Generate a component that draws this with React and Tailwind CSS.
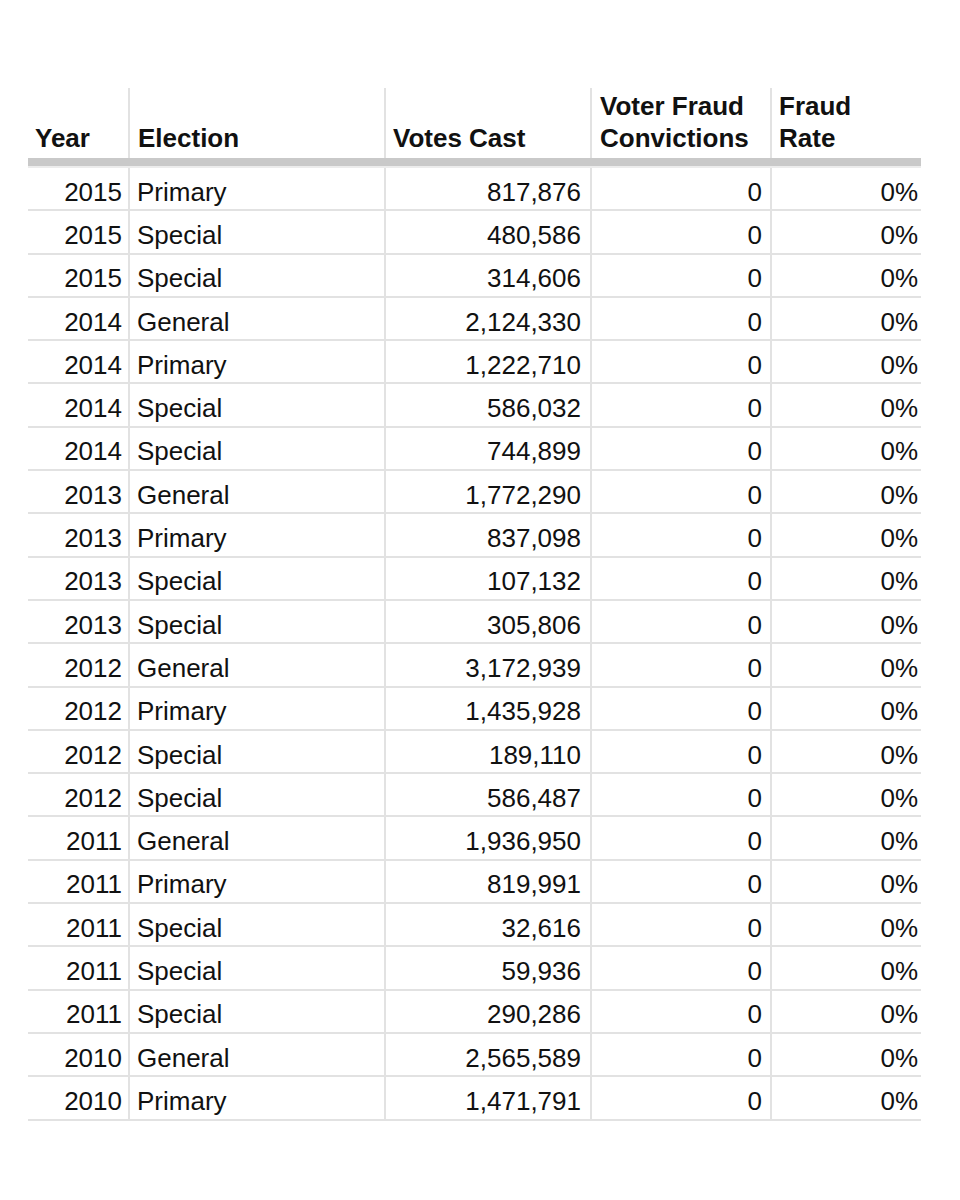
const rows = [
  ["2015", "Primary", "817,876"],
  ["2015", "Special", "480,586"],
  ["2015", "Special", "314,606"],
  ["2014", "General", "2,124,330"],
  ["2014", "Primary", "1,222,710"],
  ["2014", "Special", "586,032"],
  ["2014", "Special", "744,899"],
  ["2013", "General", "1,772,290"],
  ["2013", "Primary", "837,098"],
  ["2013", "Special", "107,132"],
  ["2013", "Special", "305,806"],
  ["2012", "General", "3,172,939"],
  ["2012", "Primary", "1,435,928"],
  ["2012", "Special", "189,110"],
  ["2012", "Special", "586,487"],
  ["2011", "General", "1,936,950"],
  ["2011", "Primary", "819,991"],
  ["2011", "Special", "32,616"],
  ["2011", "Special", "59,936"],
  ["2011", "Special", "290,286"],
  ["2010", "General", "2,565,589"],
  ["2010", "Primary", "1,471,791"],
];

const cols = "grid grid-cols-[102px_256px_206px_180px_149px]";

export default function App() {
  return (
    <div className="w-[960px] h-[1200px] bg-white pt-[88px] pl-[28px] text-[26px] text-[#111] font-[family-name:'Liberation_Sans',Arial,sans-serif]">
      <div className="w-[893px]">
        {/* header */}
        <div className={`${cols} h-[70px] font-bold leading-[32px]`}>
          <div className="flex flex-col justify-end pl-[7px] pb-[4px] border-r-2 border-[#e2e2e2]">Year</div>
          <div className="flex flex-col justify-end pl-[8px] pb-[4px] border-r-2 border-[#e2e2e2]">Election</div>
          <div className="flex flex-col justify-end pl-[7px] pb-[4px] border-r-2 border-[#e2e2e2]">Votes Cast</div>
          <div className="flex flex-col justify-end pl-[8px] pb-[4px] border-r-2 border-[#e2e2e2]">
            <span>Voter Fraud</span>
            <span>Convictions</span>
          </div>
          <div className="flex flex-col justify-end pl-[7px] pb-[4px]">
            <span>Fraud</span>
            <span>Rate</span>
          </div>
        </div>
        <div className="h-[8px] bg-[#c9c9c9]" />
        <div className="h-[2px] bg-[#ececec]" />

        {/* body */}
        {rows.map(([year, type, votes], i) => (
          <div key={i} className={`${cols} h-[43.3px] border-b-2 border-[#e2e2e2] leading-none`}>
            <div className="flex items-center justify-end pr-[6px] pt-[6px] border-r-2 border-[#e2e2e2]">{year}</div>
            <div className="flex items-center pl-[7px] pt-[6px] border-r-2 border-[#e2e2e2]">{type}</div>
            <div className="flex items-center justify-end pr-[9px] pt-[6px] border-r-2 border-[#e2e2e2]">{votes}</div>
            <div className="flex items-center justify-end pr-[8px] pt-[6px] border-r-2 border-[#e2e2e2]">0</div>
            <div className="flex items-center justify-end pr-[3px] pt-[6px]">0%</div>
          </div>
        ))}
      </div>
    </div>
  );
}
